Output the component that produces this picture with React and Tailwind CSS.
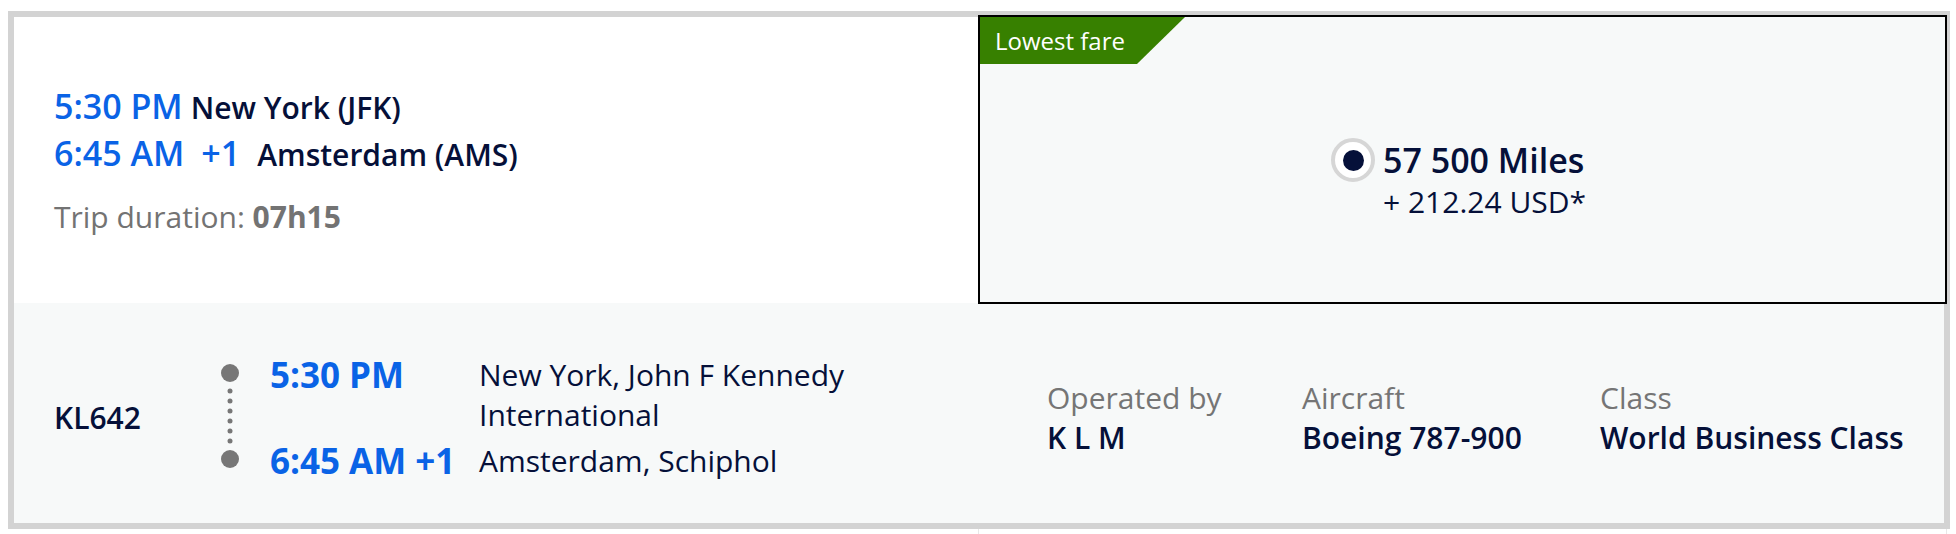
import React from 'react';

const Timeline = () => (
  <svg width="18" height="104" viewBox="0 0 18 104" className="mt-[9px] shrink-0">
    <circle cx="9" cy="9" r="9" fill="#777777" />
    {[27, 37, 47, 57, 67, 77].map((y) => (
      <circle key={y} cx="9" cy={y} r="2.5" fill="#777777" />
    ))}
    <circle cx="9" cy="95" r="9" fill="#777777" />
  </svg>
);

const Detail = ({ label, value, width }) => (
  <div className={`${width} shrink-0 text-[30px] leading-[40px]`}>
    <div className="text-[#757575]">{label}</div>
    <div className="font-semibold text-[#051039] whitespace-nowrap">{value}</div>
  </div>
);

export default function App() {
  return (
    <div className="bg-white min-h-screen pt-[11px] pl-[8px] font-['Open_Sans',sans-serif]">
      <div className="w-[1942px] border-[6px] border-[#d3d3d3]">
        {/* Summary row */}
        <div className="flex h-[286px]">
          <div className="flex-1 bg-white flex flex-col justify-center pl-[40px]">
            <div className="text-[34px] leading-[47px] whitespace-nowrap">
              <span className="font-semibold text-[#0a63e6]">5:30 PM</span>
              <span className="ml-[8px] text-[30px] leading-[40px] font-semibold text-[#051039]">New York (JFK)</span>
            </div>
            <div className="text-[34px] leading-[47px] whitespace-nowrap">
              <span className="font-semibold text-[#0a63e6]">6:45 AM</span>
              <span className="ml-[17px] font-semibold text-[#0a63e6]">+1</span>
              <span className="ml-[17px] text-[30px] leading-[40px] font-semibold text-[#051039]">Amsterdam (AMS)</span>
            </div>
            <div className="mt-[20px] text-[30px] leading-[40px] text-[#737373]">
              Trip duration: <span className="font-bold">07h15</span>
            </div>
          </div>

          {/* Fare box */}
          <div className="relative z-10 w-[969px] h-[289px] -mt-[2px] -mr-[3px] shrink-0 border-2 border-black bg-[#f7f9f9] flex flex-col">
            <div className="w-[205px] h-[47px] bg-[#378000] [clip-path:polygon(0_0,100%_0,calc(100%-48px)_100%,0_100%)] flex items-center pl-[15px]">
              <span className="text-[24px] text-white leading-none">Lowest fare</span>
            </div>
            <div className="flex-1 flex items-center justify-center pb-[6px] pr-[8px]">
              <div className="flex items-start gap-[8px]">
                <div className="h-[44px] flex items-center">
                  <div className="w-[44px] h-[44px] rounded-full border-[4px] border-[#d6d6d6] bg-white flex items-center justify-center">
                    <div className="w-[21px] h-[21px] rounded-full bg-[#051039]" />
                  </div>
                </div>
                <div className="text-[#051039]">
                  <div className="text-[34px] leading-[44px] font-semibold">57 500 Miles</div>
                  <div className="text-[30px] leading-[40px]">+ 212.24 USD*</div>
                </div>
              </div>
            </div>
          </div>
        </div>

        {/* Segment details row */}
        <div className="flex h-[220px] bg-[#f7f9f9] items-center pt-[10px]">
          <div className="w-[1033px] shrink-0 pl-[40px] flex items-center">
            <div className="w-[167px] shrink-0 self-center text-[30px] leading-[40px] font-semibold text-[#051039]">
              KL642
            </div>
            <div className="flex items-start">
              <Timeline />
              <div className="ml-[31px] grid grid-cols-[209px_430px] gap-y-[6px]">
                <div className="text-[35px] leading-[40px] font-bold text-[#0a63e6] whitespace-nowrap">5:30 PM</div>
                <div className="text-[30px] leading-[40px] text-[#051039]">New York, John F Kennedy International</div>
                <div className="text-[35px] leading-[40px] font-bold text-[#0a63e6] whitespace-nowrap">6:45 AM +1</div>
                <div className="text-[30px] leading-[40px] text-[#051039]">Amsterdam, Schiphol</div>
              </div>
            </div>
          </div>
          <div className="flex-1 flex">
            <Detail label="Operated by" value="K L M" width="w-[255px]" />
            <Detail label="Aircraft" value="Boeing 787-900" width="w-[298px]" />
            <Detail label="Class" value="World Business Class" width="w-[310px]" />
          </div>
        </div>
      </div>
      <div className="ml-[970px] w-[969px] h-[5px] border-x border-[#e8e8e8]" />
    </div>
  );
}
